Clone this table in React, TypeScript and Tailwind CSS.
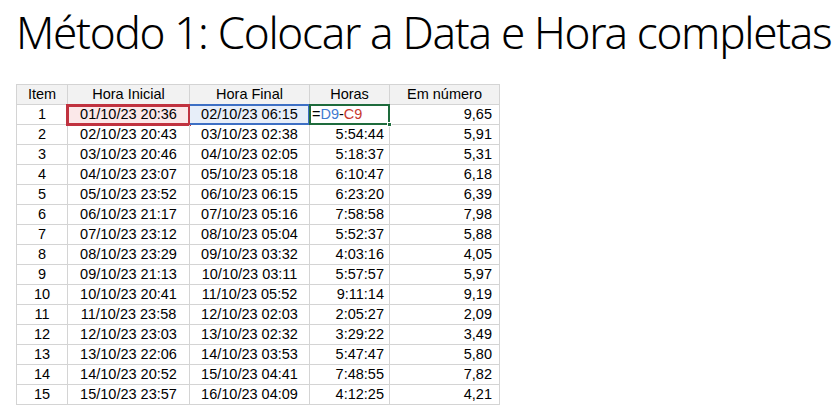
import React from "react";

const rows: [string, string, string, string, string][] = [
  ["1", "01/10/23 20:36", "02/10/23 06:15", "=D9-C9", "9,65"],
  ["2", "02/10/23 20:43", "03/10/23 02:38", "5:54:44", "5,91"],
  ["3", "03/10/23 20:46", "04/10/23 02:05", "5:18:37", "5,31"],
  ["4", "04/10/23 23:07", "05/10/23 05:18", "6:10:47", "6,18"],
  ["5", "05/10/23 23:52", "06/10/23 06:15", "6:23:20", "6,39"],
  ["6", "06/10/23 21:17", "07/10/23 05:16", "7:58:58", "7,98"],
  ["7", "07/10/23 23:12", "08/10/23 05:04", "5:52:37", "5,88"],
  ["8", "08/10/23 23:29", "09/10/23 03:32", "4:03:16", "4,05"],
  ["9", "09/10/23 21:13", "10/10/23 03:11", "5:57:57", "5,97"],
  ["10", "10/10/23 20:41", "11/10/23 05:52", "9:11:14", "9,19"],
  ["11", "11/10/23 23:58", "12/10/23 02:03", "2:05:27", "2,09"],
  ["12", "12/10/23 23:03", "13/10/23 02:32", "3:29:22", "3,49"],
  ["13", "13/10/23 22:06", "14/10/23 03:53", "5:47:47", "5,80"],
  ["14", "14/10/23 20:52", "15/10/23 04:41", "7:48:55", "7,82"],
  ["15", "15/10/23 23:57", "16/10/23 04:09", "4:12:25", "4,21"],
];

const cell = "h-[20px] border-r border-b border-[#d4d4d4] flex items-center leading-none";

export default function App() {
  return (
    <div className="w-[834px] h-[413px] bg-white overflow-hidden text-black">
      <div className="h-[84px] pl-[16px] pt-[4px]">
        <div
          className="text-[44px] leading-[56px] font-light tracking-[-1.3px] whitespace-nowrap"
          style={{ fontFamily: "'Noto Sans', sans-serif" }}
        >
          Método 1: Colocar a Data e Hora completas
        </div>
      </div>
      <div
        className="ml-[16px] w-[484px] border-l border-t border-[#d4d4d4] grid grid-cols-[51px_122px_120px_80px_110px] text-[14.5px]"
        style={{ fontFamily: "'Liberation Sans', Arial, sans-serif" }}
      >
        {["Item", "Hora Inicial", "Hora Final", "Horas", "Em número"].map((h) => (
          <div key={h} className={`${cell} justify-center bg-[#f2f2f2]`}>
            {h}
          </div>
        ))}
        {rows.map((r, i) => (
          <React.Fragment key={i}>
            <div className={`${cell} justify-center`}>{r[0]}</div>
            <div className={`${cell} justify-center relative ${i === 0 ? "bg-[#fbe8e9]" : ""}`}>
              {i === 0 && (
                <div className="absolute left-[-2px] right-[-2px] top-[-1px] bottom-[-2px] border-[3px] border-[#c0323f]" />
              )}
              <span className="relative">{r[1]}</span>
            </div>
            <div className={`${cell} justify-center relative ${i === 0 ? "bg-[#e7eef9]" : ""}`}>
              {i === 0 && (
                <div className="absolute left-[0px] right-[-1px] top-[-1px] bottom-[-1px] border-2 border-l-0 border-[#3d6fc4]" />
              )}
              <span className="relative">{r[2]}</span>
            </div>
            {i === 0 ? (
              <div className={`${cell} justify-start pl-[2px] relative`}>
                <div className="absolute left-[-1px] right-[-1px] top-[-1px] bottom-[-1px] border-2 border-[#1e6b3c]" />
                <div className="absolute right-[-3px] bottom-[-3px] w-[5px] h-[5px] bg-[#1e6b3c] border border-white" />
                <span className="relative">
                  =<span className="text-[#3f7bd0]">D9</span>-<span className="text-[#c8372d]">C9</span>
                </span>
              </div>
            ) : (
              <div className={`${cell} justify-end pr-[5px]`}>{r[3]}</div>
            )}
            <div className={`${cell} justify-end pr-[7px]`}>{r[4]}</div>
          </React.Fragment>
        ))}
      </div>
    </div>
  );
}
